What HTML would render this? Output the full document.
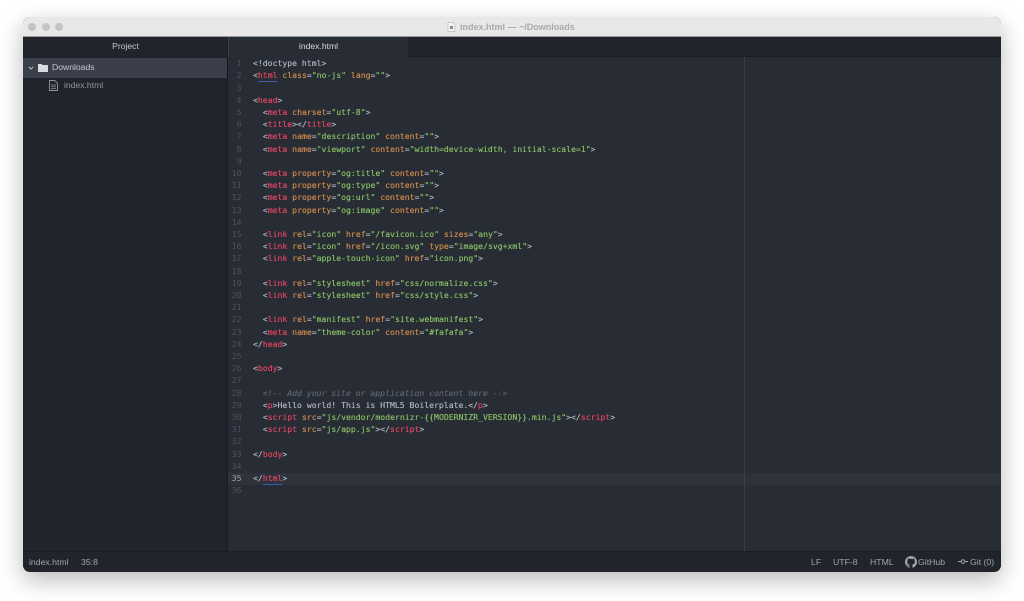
<!DOCTYPE html>
<html><head><meta charset="utf-8"><title>index.html</title>
<style>
html,body{margin:0;padding:0;background:#fff;width:1024px;height:601px;overflow:hidden}
*{box-sizing:border-box}
.abs,.win div{position:absolute}
.win{position:absolute;left:23px;top:17px;width:978px;height:555px;border-radius:7px;background:#282c34;box-shadow:0 8px 24px rgba(0,0,0,.28);overflow:hidden;font-family:"Liberation Sans",sans-serif}
.tb{left:0;top:0;width:978px;height:20px;background:#e8e8e8;border-bottom:1px solid #9a9a9a}
.dot{width:8px;height:8px;border-radius:50%;background:#c4c4c4;top:5.5px}
.ttl{left:437px;top:4px;font-size:9px;line-height:12px;font-weight:bold;color:#a9a9a9;white-space:nowrap}
.side{left:0;top:20px;width:205px;height:514px;background:#21252b;border-right:1px solid #181a1f}
.tabs{left:205px;top:20px;width:773px;height:20px;background:#21252b;border-bottom:1px solid #1b1e23}
.tab{left:205px;top:20px;width:180px;height:20px;background:#282c34;border-left:1px solid #3a3f48;color:#d7dae0;font-size:8.6px;line-height:19px;text-align:center}
.ph{left:0;top:20px;width:205px;height:20px;color:#c4c8cf;font-size:8.6px;line-height:19px;text-align:center;background:#21252b;z-index:2}
.sel{left:0;top:41px;width:204px;height:20px;background:#3a3f4b}
.t1{left:29px;top:44px;color:#c4c8cf;font-size:8.6px;line-height:12px}
.t2{left:41px;top:62px;color:#8f95a1;font-size:8.6px;line-height:12px}
.code{left:205px;top:40px;width:773px;height:494px}
.active{left:0;top:416px;width:773px;height:11.600px;background:#2d323b}
.guide{left:516px;top:0;width:1px;height:494px;background:#3a3f48}
.l{left:25px;margin-top:.3px;height:12.2px;font:8.15px/12.2px "DejaVu Sans Mono",monospace;color:#abb2bf;white-space:pre;text-shadow:0 0 .4px currentColor}
.n{left:0;margin-top:.3px;width:13.500px;text-align:right;height:12.2px;font:8.12px/12.2px "DejaVu Sans Mono",monospace;color:#4b5263}
.t{color:#df4462}.a{color:#cb8a4c}.s{color:#85bd66}.c{color:#5c6370;font-style:italic}
.u{position:relative}
.u:after{content:"";position:absolute;left:0;right:0;bottom:-1.5px;height:1px;background:#3f5fb0}
.st{left:0;top:534px;width:978px;height:21px;background:#21252b;border-top:1px solid #1b1e23;color:#9da5b4;font-size:8.7px;line-height:20px}
.st span{position:absolute;top:0;white-space:nowrap}
</style></head><body>
<div class="win" style="filter:blur(.3px)">
<div class="tb"></div>
<div class="dot" style="left:5px"></div><div class="dot" style="left:19px"></div><div class="dot" style="left:32px"></div>
<svg class="abs" style="position:absolute;left:424px;top:5px" width="9" height="10" viewBox="0 0 9 10"><path d="M1 .5h5l2 2v7H1z" fill="#f4f4f4" stroke="#bdbdbd" stroke-width=".7"/><path d="M3 4h3v3H3z" fill="#8a8a8a"/></svg>
<div class="ttl">index.html — ~/Downloads</div>
<div class="side"></div>
<div class="tabs"></div>
<div class="tab">index.html</div>
<div class="ph">Project</div>
<div class="sel"></div>
<svg style="position:absolute;left:5px;top:48px" width="6" height="6" viewBox="0 0 6 6"><path d="M.8 1.8 3 4l2.2-2.2" fill="none" stroke="#c4c8cf" stroke-width="1"/></svg>
<svg style="position:absolute;left:15px;top:46px" width="10" height="9" viewBox="0 0 10 9"><path d="M0 1h3.6l1 1H10v7H0z" fill="#d7dae0"/></svg>
<div class="t1">Downloads</div>
<svg style="position:absolute;left:26px;top:63px" width="9" height="11" viewBox="0 0 9 11"><path d="M.5.5h5.2l2.8 2.8v7.2H.5z" fill="none" stroke="#8f95a1" stroke-width=".9"/><path d="M2 5h5M2 6.800h5M2 8.500h5" stroke="#8f95a1" stroke-width=".7"/></svg>
<div class="t2">index.html</div>
<div class="code">
<div class="active"></div>
<div class="guide"></div>
<div class="n" style="top:0">1</div><div class="l" style="top:0">&lt;!doctype html&gt;</div>
<div class="n" style="top:12.2px">2</div><div class="l" style="top:12.2px">&lt;<span class="t u">html</span> <span class="a">class</span>=<span class="s">"no-js"</span> <span class="a">lang</span>=<span class="s">""</span>&gt;</div>
<div class="n" style="top:24.4px">3</div>
<div class="n" style="top:36.6px">4</div><div class="l" style="top:36.6px">&lt;<span class="t">head</span>&gt;</div>
<div class="n" style="top:48.8px">5</div><div class="l" style="top:48.8px">  &lt;<span class="t">meta</span> <span class="a">charset</span>=<span class="s">"utf-8"</span>&gt;</div>
<div class="n" style="top:61px">6</div><div class="l" style="top:61px">  &lt;<span class="t">title</span>&gt;&lt;/<span class="t">title</span>&gt;</div>
<div class="n" style="top:73.2px">7</div><div class="l" style="top:73.2px">  &lt;<span class="t">meta</span> <span class="a">name</span>=<span class="s">"description"</span> <span class="a">content</span>=<span class="s">""</span>&gt;</div>
<div class="n" style="top:85.4px">8</div><div class="l" style="top:85.4px">  &lt;<span class="t">meta</span> <span class="a">name</span>=<span class="s">"viewport"</span> <span class="a">content</span>=<span class="s">"width=device-width, initial-scale=1"</span>&gt;</div>
<div class="n" style="top:97.6px">9</div>
<div class="n" style="top:109.8px">10</div><div class="l" style="top:109.8px">  &lt;<span class="t">meta</span> <span class="a">property</span>=<span class="s">"og:title"</span> <span class="a">content</span>=<span class="s">""</span>&gt;</div>
<div class="n" style="top:122px">11</div><div class="l" style="top:122px">  &lt;<span class="t">meta</span> <span class="a">property</span>=<span class="s">"og:type"</span> <span class="a">content</span>=<span class="s">""</span>&gt;</div>
<div class="n" style="top:134.2px">12</div><div class="l" style="top:134.2px">  &lt;<span class="t">meta</span> <span class="a">property</span>=<span class="s">"og:url"</span> <span class="a">content</span>=<span class="s">""</span>&gt;</div>
<div class="n" style="top:146.4px">13</div><div class="l" style="top:146.4px">  &lt;<span class="t">meta</span> <span class="a">property</span>=<span class="s">"og:image"</span> <span class="a">content</span>=<span class="s">""</span>&gt;</div>
<div class="n" style="top:158.6px">14</div>
<div class="n" style="top:170.8px">15</div><div class="l" style="top:170.8px">  &lt;<span class="t">link</span> <span class="a">rel</span>=<span class="s">"icon"</span> <span class="a">href</span>=<span class="s">"/favicon.ico"</span> <span class="a">sizes</span>=<span class="s">"any"</span>&gt;</div>
<div class="n" style="top:183px">16</div><div class="l" style="top:183px">  &lt;<span class="t">link</span> <span class="a">rel</span>=<span class="s">"icon"</span> <span class="a">href</span>=<span class="s">"/icon.svg"</span> <span class="a">type</span>=<span class="s">"image/svg+xml"</span>&gt;</div>
<div class="n" style="top:195.2px">17</div><div class="l" style="top:195.2px">  &lt;<span class="t">link</span> <span class="a">rel</span>=<span class="s">"apple-touch-icon"</span> <span class="a">href</span>=<span class="s">"icon.png"</span>&gt;</div>
<div class="n" style="top:207.4px">18</div>
<div class="n" style="top:219.6px">19</div><div class="l" style="top:219.6px">  &lt;<span class="t">link</span> <span class="a">rel</span>=<span class="s">"stylesheet"</span> <span class="a">href</span>=<span class="s">"css/normalize.css"</span>&gt;</div>
<div class="n" style="top:231.8px">20</div><div class="l" style="top:231.8px">  &lt;<span class="t">link</span> <span class="a">rel</span>=<span class="s">"stylesheet"</span> <span class="a">href</span>=<span class="s">"css/style.css"</span>&gt;</div>
<div class="n" style="top:244px">21</div>
<div class="n" style="top:256.2px">22</div><div class="l" style="top:256.2px">  &lt;<span class="t">link</span> <span class="a">rel</span>=<span class="s">"manifest"</span> <span class="a">href</span>=<span class="s">"site.webmanifest"</span>&gt;</div>
<div class="n" style="top:268.4px">23</div><div class="l" style="top:268.4px">  &lt;<span class="t">meta</span> <span class="a">name</span>=<span class="s">"theme-color"</span> <span class="a">content</span>=<span class="s">"#fafafa"</span>&gt;</div>
<div class="n" style="top:280.6px">24</div><div class="l" style="top:280.6px">&lt;/<span class="t">head</span>&gt;</div>
<div class="n" style="top:292.8px">25</div>
<div class="n" style="top:305px">26</div><div class="l" style="top:305px">&lt;<span class="t">body</span>&gt;</div>
<div class="n" style="top:317.2px">27</div>
<div class="n" style="top:329.4px">28</div><div class="l c" style="top:329.4px;color:#5c6370">  &lt;!-- Add your site or application content here --&gt;</div>
<div class="n" style="top:341.6px">29</div><div class="l" style="top:341.6px">  &lt;<span class="t">p</span>&gt;Hello world! This is HTML5 Boilerplate.&lt;/<span class="t">p</span>&gt;</div>
<div class="n" style="top:353.8px">30</div><div class="l" style="top:353.8px">  &lt;<span class="t">script</span> <span class="a">src</span>=<span class="s">"js/vendor/modernizr-{{MODERNIZR_VERSION}}.min.js"</span>&gt;&lt;/<span class="t">script</span>&gt;</div>
<div class="n" style="top:366px">31</div><div class="l" style="top:366px">  &lt;<span class="t">script</span> <span class="a">src</span>=<span class="s">"js/app.js"</span>&gt;&lt;/<span class="t">script</span>&gt;</div>
<div class="n" style="top:378.2px">32</div>
<div class="n" style="top:390.4px">33</div><div class="l" style="top:390.4px">&lt;/<span class="t">body</span>&gt;</div>
<div class="n" style="top:402.6px">34</div>
<div class="n" style="top:414.8px;color:#9da5b4">35</div><div class="l" style="top:414.8px">&lt;/<span class="t u">html</span>&gt;</div>
<div class="n" style="top:427px">36</div>
</div>
<div class="st">
<span style="left:6px">index.html</span><span style="left:58px">35:8</span>
<span style="left:788px">LF</span><span style="left:810px">UTF-8</span><span style="left:847px">HTML</span>
<svg style="position:absolute;left:882px;top:4px" width="12" height="12" viewBox="0 0 16 16"><path fill="#9da5b4" d="M8 0C3.580 0 0 3.580 0 8c0 3.540 2.290 6.530 5.470 7.590.4.070.55-.17.55-.38 0-.19-.01-.82-.01-1.490-2.010.37-2.530-.49-2.690-.94-.09-.23-.48-.94-.82-1.130-.28-.15-.68-.52-.01-.53.63-.01 1.080.58 1.230.82.720 1.210 1.870.87 2.330.66.070-.52.280-.87.510-1.070-1.780-.2-3.640-.89-3.640-3.950 0-.87.310-1.590.820-2.150-.08-.2-.36-1.020.08-2.120 0 0 .67-.21 2.200.82.640-.18 1.320-.27 2-.27s1.360.09 2 .27c1.530-1.040 2.200-.82 2.200-.82.440 1.100.16 1.920.08 2.120.51.560.82 1.270.82 2.150 0 3.070-1.870 3.750-3.650 3.950.29.25.54.73.54 1.480 0 1.070-.01 1.930-.01 2.200 0 .21.150.46.550.38A8.010 8.010 0 0 0 16 8c0-4.420-3.580-8-8-8z"/></svg>
<span style="left:895px">GitHub</span>
<svg style="position:absolute;left:935px;top:6px" width="10" height="7" viewBox="0 0 10 7"><circle cx="5" cy="3.500" r="1.800" fill="none" stroke="#9da5b4" stroke-width="1"/><path d="M0 3.500h3M7 3.500h3" stroke="#9da5b4" stroke-width="1"/></svg>
<span style="left:947px">Git (0)</span>
</div>
</div>
</body></html>
